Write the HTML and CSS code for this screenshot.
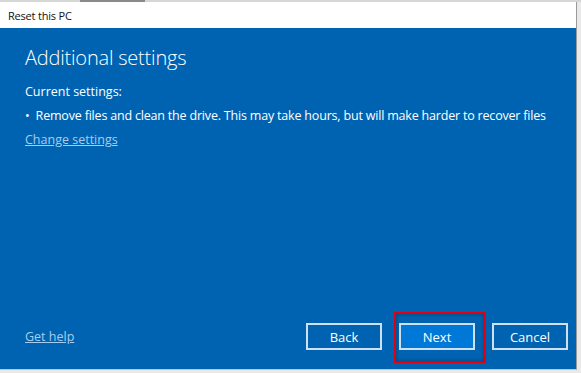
FILE: index.html
```html
<!DOCTYPE html>
<html lang="en">
<head>
    <meta charset="UTF-8">
    <meta name="viewport" content="width=device-width, initial-scale=1.0">
    <title>Reset this PC</title>
    <link rel="stylesheet" href="styles.css">
</head>
<body>
    <div class="behind">
        <div class="behind-tab"></div>
    </div>
    <div class="ventana">
        <div class="titulo">Reset this PC</div>
        <div class="panel">
            <div class="contenido">
                <h1>Additional settings</h1>
                <p class="actual">Current settings:</p>
                <p class="punto">&bull;&nbsp; Remove files and clean the drive. This may take hours, but will make harder to recover files</p>
                <a class="enlace" href="#">Change settings</a>
            </div>
            <div class="pie">
                <a class="enlace" href="#">Get help</a>
                <div class="botones">
                    <button class="boton">Back</button>
                    <button class="boton principal">Next</button>
                    <button class="boton">Cancel</button>
                </div>
                <div class="marca"></div>
            </div>
        </div>
    </div>
</body>
</html>
```

FILE: styles.css
```css
*{
    margin: 0;
    padding: 0;
    box-sizing: border-box;
}
body{
    width: 581px;
    height: 373px;
    background: #e9e9e9;
    font-family: "Open Sans", "Noto Sans", sans-serif;
    overflow: hidden;
}
.behind{
    height: 2px;
    background: #d6d6d6;
    padding-left: 80px;
}
.behind-tab{
    width: 65px;
    height: 2px;
    background: #8a8a8a;
}
.ventana{
    width: 577px;
    height: 368px;
    border-right: 1px solid #9a9a9a;
    border-bottom: 1px solid #c4c4c4;
    display: flex;
    flex-direction: column;
}
.titulo{
    height: 26px;
    background: #fff;
    color: #111;
    font-size: 11px;
    padding: 6px 0 0 8px;
    letter-spacing: -0.2px;
}
.panel{
    flex: 1;
    background: #0063b1;
    color: #fff;
    display: flex;
    flex-direction: column;
    justify-content: space-between;
    padding: 16px 0 19px 25px;
}
h1{
    font-weight: 300;
    font-size: 20px;
    line-height: 28px;
    letter-spacing: -0.2px;
}
.actual{
    font-size: 12.5px;
    margin-top: 11px;
    line-height: 18px;
}
.punto{
    font-size: 12.5px;
    line-height: 18px;
    margin-top: 6px;
    letter-spacing: -0.19px;
}
.enlace{
    display: inline-block;
    color: #a6cdf0;
    font-size: 12.5px;
    line-height: 18px;
    margin-top: 6px;
}
.pie{
    position: relative;
    display: flex;
    justify-content: space-between;
    align-items: center;
    padding-right: 8px;
}
.pie .enlace{
    margin-top: 0;
}
.botones{
    display: flex;
    gap: 17px;
}
.boton{
    width: 76px;
    height: 27px;
    border: 2px solid #cfe1f1;
    background: transparent;
    color: #fff;
    font-family: inherit;
    font-size: 13px;
}
.principal{
    background: #0078d7;
}
.marca{
    position: absolute;
    left: 369px;
    top: -11px;
    width: 92px;
    height: 51px;
    border: 2px solid #e00010;
    box-shadow: inset 0 0 4px rgba(0, 0, 0, .35);
}
```
